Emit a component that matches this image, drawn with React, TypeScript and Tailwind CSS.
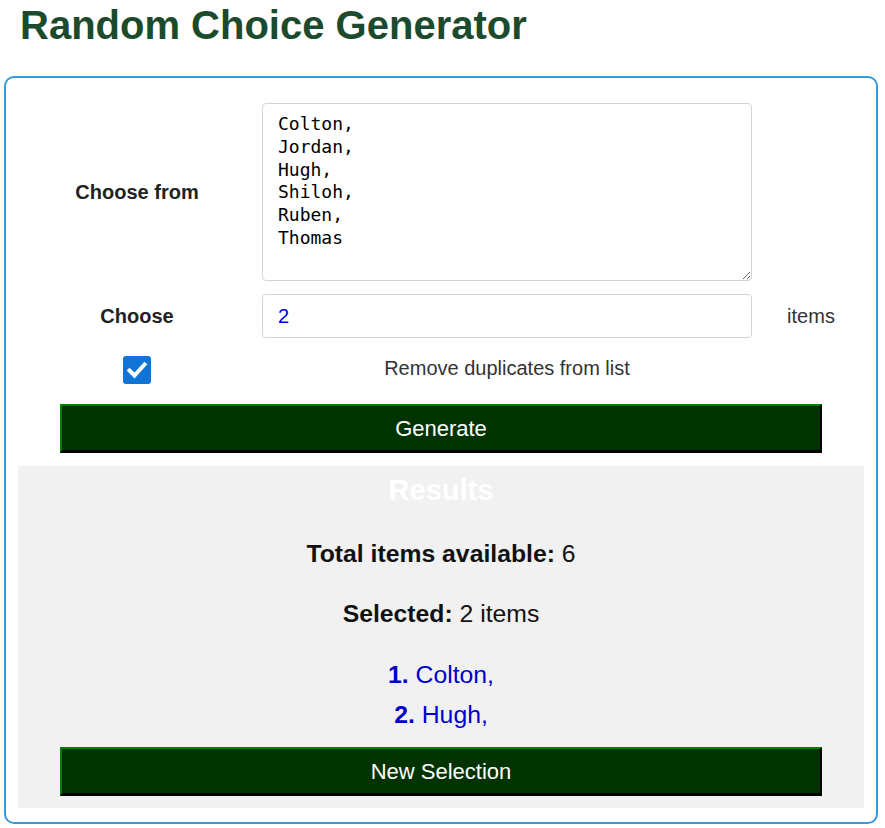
import { useState } from 'react';

const initialList = 'Colton,\nJordan,\nHugh,\nShiloh,\nRuben,\nThomas';

const CheckMark = () => (
  <svg viewBox="0 0 28 28" className="w-[28px] h-[28px]">
    <rect x="0" y="0" width="28" height="28" rx="3" fill="#0f74d6" />
    <path
      d="M6.5 14.5 L11.5 19.5 L21.5 8.5"
      fill="none"
      stroke="#ffffff"
      strokeWidth="4"
      strokeLinecap="square"
    />
  </svg>
);

const App = () => {
  const [list, setList] = useState(initialList);
  const [count, setCount] = useState('2');
  const [dedupe, setDedupe] = useState(true);

  const items = list
    .split('\n')
    .map((s) => s.trim())
    .filter((s) => s.length > 0);
  const picked = [items[0], items[2]];

  return (
    <div className="font-['Liberation_Sans',Arial,sans-serif] bg-white min-h-[828px] pt-[2px]">
      <h1 className="ml-[20px] text-[40px] leading-[46px] font-bold text-[#1c4a2c]">
        Random Choice Generator
      </h1>

      <div className="mt-[28px] ml-[4px] w-[874px] border-2 border-[#3a9ad9] rounded-[10px] pt-[25px] px-[12px] pb-[14px]">
        {/* 入力フォーム */}
        <div className="grid grid-cols-[238px_490px_1fr] gap-x-[6px] items-center">
          <div className="text-center text-[20px] font-bold text-[#222]">Choose from</div>
          <textarea
            value={list}
            onChange={(e) => setList(e.target.value)}
            className="h-[178px] w-full border border-[#d0d4d8] rounded-[4px] pt-[9px] px-[15px] text-[18px] leading-[22.8px] text-black font-['DejaVu_Sans_Mono',monospace] outline-none"
          />
          <div />

          <div className="mt-[13px] text-center text-[20px] font-bold text-[#222]">Choose</div>
          <input
            value={count}
            onChange={(e) => setCount(e.target.value)}
            className="mt-[13px] h-[44px] w-full border border-[#d0d4d8] rounded-[4px] px-[15px] text-[20px] text-[#0000ee] outline-none"
          />
          <div className="mt-[13px] text-center text-[20px] text-[#333]">items</div>

          <div className="mt-[18px] flex justify-center">
            <button onClick={() => setDedupe(!dedupe)} className="w-[28px] h-[28px]">
              {dedupe ? (
                <CheckMark />
              ) : (
                <span className="block w-[28px] h-[28px] border-2 border-gray-500 rounded-[3px]" />
              )}
            </button>
          </div>
          <div className="mt-[18px] mb-[4px] text-center text-[20px] leading-[24px] text-[#333]">
            Remove duplicates from list
          </div>
          <div />
        </div>

        <div className="mt-[20px] flex justify-center">
          <button className="w-[90%] h-[49px] bg-[#003300] border-2 border-b-[3px] border-t-[#008000] border-l-[#008000] border-b-black border-r-black text-white text-[22px]">
            Generate
          </button>
        </div>

        {/* 結果 */}
        <div className="mt-[13px] bg-[#f1f1f1] pt-[7px] pb-[12px] text-center">
          <h2 className="text-[29px] leading-[34px] font-bold text-white">Results</h2>
          <p className="mt-[33px] text-[24.75px] leading-[28px] text-[#111]">
            <span className="font-bold">Total items available:</span> {items.length}
          </p>
          <p className="mt-[32px] text-[24.75px] leading-[28px] text-[#111]">
            <span className="font-bold">Selected:</span> {count} items
          </p>
          <div className="mt-[33px] flex flex-col gap-[12px] text-[24.75px] leading-[28px] text-[#0000cd]">
            {picked.map((name, i) => (
              <div key={i}>
                <span className="font-bold">{i + 1}.</span> {name}
              </div>
            ))}
          </div>
          <div className="mt-[18px] flex justify-center">
            <button className="w-[90%] h-[49px] bg-[#003300] border-2 border-b-[3px] border-t-[#008000] border-l-[#008000] border-b-black border-r-black text-white text-[22px]">
              New Selection
            </button>
          </div>
        </div>
      </div>
    </div>
  );
};

export default App;
